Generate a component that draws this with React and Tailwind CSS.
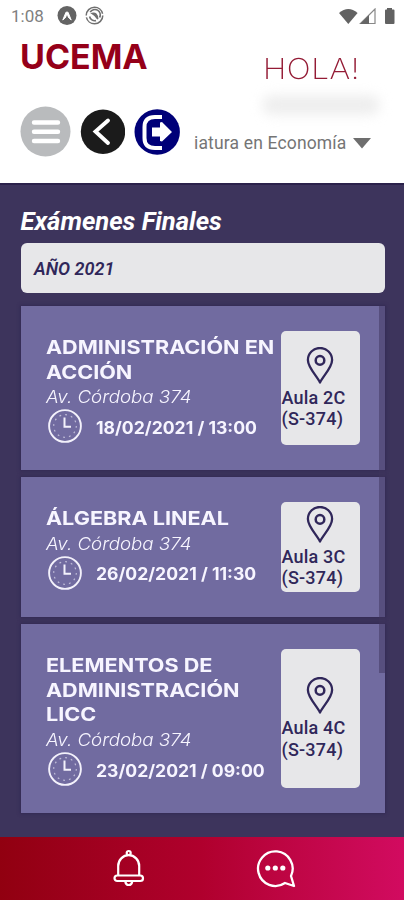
import React from 'react';

const exams = [
  { lines: ['ADMINISTRACIÓN EN', 'ACCIÓN'], date: '18/02/2021 / 13:00', room: 'Aula 2C', size: 'h-[164px]', gap: 'mb-[7px]' },
  { lines: ['ÁLGEBRA LINEAL'], date: '26/02/2021 / 11:30', room: 'Aula 3C', size: 'h-[140px]', gap: 'mb-[7px]' },
  { lines: ['ELEMENTOS DE', 'ADMINISTRACIÓN', 'LICC'], date: '23/02/2021 / 09:00', room: 'Aula 4C', size: 'h-[189px]', gap: '' },
];

function Clock() {
  return (
    <svg className="ml-[2px] block h-[34px] w-[34px] shrink-0" viewBox="0 0 34 34" fill="none" stroke="#f3f1fb">
      <circle cx="17" cy="17" r="15.9" strokeWidth="1.9" />
      <circle cx="17" cy="17" r="11.3" strokeWidth="1.2" strokeDasharray="1.8 4.1" opacity="0.6" />
      <path d="M16.5 8.5V17.8H23" strokeWidth="2" />
    </svg>
  );
}

function Pin() {
  return (
    <svg className="block h-[37px] w-[28px] shrink-0" viewBox="0 0 28 37" fill="none" stroke="#30275a" strokeWidth="2.3">
      <path d="M14 35.5C10.5 28.5 1.9 20.5 1.9 13A12.1 12 0 0 1 26.1 13C26.1 20.5 17.5 28.5 14 35.5Z" strokeLinejoin="round" />
      <circle cx="14" cy="13.4" r="4.3" strokeWidth="2.5" />
    </svg>
  );
}

function StatusBar() {
  return (
    <div className="flex h-[32px] items-center pl-[11px] pr-[9px]">
      <span className="w-[46px] whitespace-nowrap font-[Roboto,sans-serif] text-[17px] leading-none text-[#808080]">1:08</span>
      <svg className="h-[20px] w-[20px]" viewBox="0 0 20 20">
        <circle cx="10" cy="9.5" r="9.5" fill="#646464" />
        <path d="M5.8 14L9 6.2H11L14.2 14L10 10Z" fill="#fff" stroke="#fff" strokeWidth="1" strokeLinejoin="round" />
        <path d="M8 14L10 9L12 14Z" fill="#646464" />
      </svg>
      <svg className="ml-[8px] h-[20px] w-[20px]" viewBox="0 0 20 20" fill="none" stroke="#707070">
        <circle cx="9.5" cy="9.5" r="8.3" strokeWidth="1.5" strokeDasharray="24 2" />
        <path d="M5.2 6.2A5.3 5.3 0 0 1 14.6 11.5" strokeWidth="1.6" />
        <path d="M4.6 10.5A5.2 5.2 0 0 0 11 14.6" strokeWidth="1.6" />
        <path d="M7 7.5Q12 6 12.8 13Q10.5 9.5 7 7.5Z" fill="#707070" strokeWidth="1.4" />
      </svg>
      <svg className="ml-auto h-[17px] w-[56px]" viewBox="0 0 56 17">
        <path d="M0 5Q9.3-3 18.6 5L9.3 16Z" fill="#626262" />
        <path d="M21.5 15.5L36 1V15.5Z" fill="none" stroke="#888" strokeWidth="1.2" />
        <path d="M21 16L30 7V16Z" fill="#666" />
        <path d="M48 0H53V1.5H54.5Q55.5 1.5 55.5 2.5V15Q55.5 16 54.5 16H47Q46 16 46 15V2.5Q46 1.5 47 1.5H48Z" fill="#626262" />
      </svg>
    </div>
  );
}

function Header() {
  return (
    <header className="h-[183px] shrink-0 bg-white">
      <StatusBar />
      <div className="flex h-[151px] justify-between pl-[20px] pr-[14px]">
        <div className="pt-[7px]">
          <div className="w-[127px] origin-left whitespace-nowrap font-[Inter,sans-serif] text-[34px] font-bold leading-[36px] text-[#950019]">UCEMA</div>
          <div className="mt-[31px] flex items-center gap-[9px]">
            <svg className="h-[51px] w-[51px]" viewBox="0 0 51 51">
              <circle cx="25.5" cy="25.5" r="25" fill="#b9bbbd" />
              <path d="M14 16.5H38M14 25.7H38M14 35H38" stroke="#fff" strokeWidth="4.4" strokeLinecap="round" />
            </svg>
            <svg className="h-[45px] w-[45px]" viewBox="0 0 45 45">
              <circle cx="23" cy="22.7" r="22.2" fill="#1b1b1b" />
              <path d="M28 11.5L15.5 22.5L28 34" fill="none" stroke="#fff" strokeWidth="3.9" strokeLinecap="round" />
            </svg>
            <svg className="h-[46px] w-[46px]" viewBox="0 0 46 46">
              <circle cx="23.2" cy="23" r="22.7" fill="#000078" />
              <path d="M28 8H21Q10.5 8 10.5 18V29Q10.5 39 21 39H28" fill="none" stroke="#fff" strokeWidth="4" />
              <path d="M18 18.5H26V13.5L28 13L38 23L28 32.5L26 32V27.5H18Z" fill="#fff" />
            </svg>
          </div>
        </div>
        <div className="flex w-[196px] flex-col">
          <div className="ml-[69px] mt-[20px] w-fit origin-left scale-x-[1.09] whitespace-nowrap font-[Inter,sans-serif] text-[29px] font-extralight leading-[34px] tracking-[0.5px] text-[#941b35]">HOLA!</div>
          <div className="ml-[68px] mt-[9px] h-[20px] w-[118px] rounded-full bg-[#eeeeee] blur-[6px]" />
          <div className="mt-[17px] flex items-center">
            <div className="w-[153px] whitespace-nowrap font-[Roboto,sans-serif] text-[17.5px] leading-[22px] tracking-[0.16px] text-[#757575]">iatura en Economía</div>
            <svg className="ml-[6px] h-[11px] w-[18px]" viewBox="0 0 18 11"><path d="M0 0H18L9 10.5Z" fill="#6e6e6e" /></svg>
          </div>
        </div>
      </div>
    </header>
  );
}

function ExamCard({ exam }) {
  return (
    <article className={`flex shrink-0 bg-[#716ba0] py-[25px] pl-[25px] pr-[25px] shadow-[0_0_3px_1px_#332a54] ${exam.size} ${exam.gap}`}>
      <div className="mr-px w-[234px] shrink-0 pt-[4px] font-[Inter,sans-serif] text-[#f7f5ff]">
        {exam.lines.map((line) => (
          <h2 key={line} className="w-fit origin-left scale-x-[1.12] whitespace-nowrap text-[19.3px] font-bold leading-[24.7px]">{line}</h2>
        ))}
        <p className="w-fit origin-left scale-x-[1.07] whitespace-nowrap text-[17.5px] font-light italic leading-[25px]">Av. Córdoba 374</p>
        <div className="flex items-center">
          <Clock />
          <span className="ml-[14px] origin-left scale-x-[1.035] whitespace-nowrap pt-[4px] text-[17px] font-bold leading-[25px]">{exam.date}</span>
        </div>
      </div>
      <div className="flex w-[79px] flex-col items-center justify-center rounded-[5px] bg-[#e7e7e9]">
        <Pin />
        <div className="mt-[3px] w-full whitespace-nowrap pl-px font-[Roboto,sans-serif] text-[18px] font-medium leading-[21.5px] tracking-[0.2px] text-[#30275a]">
          <div>{exam.room}</div>
          <div>(S-374)</div>
        </div>
      </div>
    </article>
  );
}

export default function App() {
  return (
    <div className="flex h-[900px] w-[404px] flex-col overflow-hidden bg-[#3d345c]">
      <Header />
      <main className="h-[654px] border-t-2 border-[#2b214b] pl-[20.5px] pr-[19.5px]">
        <h1 className="pt-[20px] font-[Roboto,sans-serif] text-[25.6px] font-bold italic leading-[32px] text-white">Exámenes Finales</h1>
        <div className="mt-[6px] flex h-[50px] items-center rounded-[6px] bg-[#e7e7e9] pl-[13.5px] font-[Roboto,sans-serif] text-[18px] font-semibold italic text-[#30275a]">AÑO 2021</div>
        <section className="relative mt-[13px] flex flex-col">
          {exams.map((exam) => <ExamCard key={exam.date} exam={exam} />)}
          <div className="absolute right-0 top-0 h-[367px] w-[6px] bg-[#3d345c]/50" />
        </section>
      </main>
      <footer className="flex h-[63px] items-center bg-linear-to-r from-[#910010] via-[#b0002d] to-[#d20b60]">
        <svg className="ml-[113px] h-[40px] w-[32px]" viewBox="0 0 32 40" fill="none" stroke="#fff" strokeWidth="2.2">
          <circle cx="15.7" cy="4" r="2" />
          <path d="M5.2 26.5V17A10.5 10.8 0 0 1 26.2 17V26.5" />
          <rect x="1.5" y="26.5" width="28.5" height="5.5" rx="2.75" />
          <path d="M12.3 32.5A3.5 4.2 0 0 0 19.2 32.5" />
        </svg>
        <svg className="ml-[111px] h-[40px] w-[40px]" viewBox="0 0 40 40" fill="none" stroke="#fff" strokeWidth="2.3">
          <path d="M29 34A17.3 17.3 0 1 1 35 27L38 37Z" strokeLinejoin="round" />
          <g fill="#fff" stroke="none"><circle cx="11.8" cy="19" r="2.6" /><circle cx="19.3" cy="19" r="2.6" /><circle cx="26.8" cy="19" r="2.6" /></g>
        </svg>
      </footer>
    </div>
  );
}
